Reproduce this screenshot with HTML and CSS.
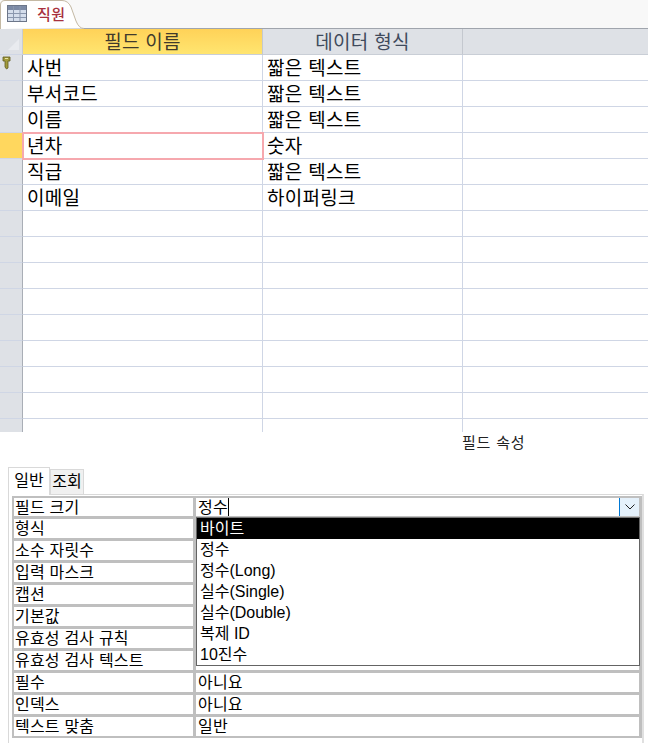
FILE: index.html
```html
<!DOCTYPE html>
<html lang="ko">
<head>
<meta charset="utf-8">
<title>직원</title>
<link rel="stylesheet" href="styles.css">
</head>
<body>
<div class="tabbar">
  <div class="doc-tab">
    <svg class="tab-shape" width="84" height="29" viewBox="0 0 84 29"><path d="M0.5 29V5Q0.5 0.5 5 0.5H62Q68 0.5 71 7L76 21Q79 28.5 84 28.5" fill="#fff" stroke="#c4b9a4"/></svg>
    <svg class="tab-icon" width="20" height="17" viewBox="0 0 20 17">
      <rect x="0.5" y="0.5" width="19" height="16" fill="#d5deec" stroke="#6c7689"/>
      <rect x="1" y="1" width="18" height="4" fill="#7d8ba6"/>
      <path d="M1 8.500H19M1 12.500H19M6.500 1V16M13 1V16" stroke="#8a97ae"/>
    </svg>
    <span class="tab-label">직원</span>
  </div>
</div>
<div class="grid">
  <div class="corner"><svg width="23" height="25" viewBox="0 0 23 25"><path d="M8 21L19 10V21Z" fill="#e9ebef"/></svg></div>
  <div class="head active">필드 이름</div>
  <div class="head">데이터 형식</div>
  <div class="head blank"></div>

  <div class="sel"><svg class="key" width="10" height="14" viewBox="0 0 10 14"><path d="M1 1H8V5H6V12L4.500 13L3 11V5H1Z" fill="#a19a3c" stroke="#5f5a20" stroke-width="0.8"/><path d="M3 2.500H6" stroke="#e8e3a0"/></svg></div><div class="cell">사번</div><div class="cell">짧은 텍스트</div><div class="cell"></div>
  <div class="sel"></div><div class="cell">부서코드</div><div class="cell">짧은 텍스트</div><div class="cell"></div>
  <div class="sel"></div><div class="cell">이름</div><div class="cell">짧은 텍스트</div><div class="cell"></div>
  <div class="sel current"></div><div class="cell focus">년차</div><div class="cell">숫자</div><div class="cell"></div>
  <div class="sel"></div><div class="cell">직급</div><div class="cell">짧은 텍스트</div><div class="cell"></div>
  <div class="sel"></div><div class="cell">이메일</div><div class="cell">하이퍼링크</div><div class="cell"></div>
  <div class="sel"></div><div class="cell"></div><div class="cell"></div><div class="cell"></div>
  <div class="sel"></div><div class="cell"></div><div class="cell"></div><div class="cell"></div>
  <div class="sel"></div><div class="cell"></div><div class="cell"></div><div class="cell"></div>
  <div class="sel"></div><div class="cell"></div><div class="cell"></div><div class="cell"></div>
  <div class="sel"></div><div class="cell"></div><div class="cell"></div><div class="cell"></div>
  <div class="sel"></div><div class="cell"></div><div class="cell"></div><div class="cell"></div>
  <div class="sel"></div><div class="cell"></div><div class="cell"></div><div class="cell"></div>
  <div class="sel"></div><div class="cell"></div><div class="cell"></div><div class="cell"></div>
  <div class="sel"></div><div class="cell"></div><div class="cell"></div><div class="cell"></div>
</div>
<div class="section-title">필드 속성</div>
<div class="prop-tabs">
  <div class="prop-tab on">일반</div>
  <div class="prop-tab">조회</div>
</div>
<div class="prop-panel">
  <div class="props">
    <div class="name">필드 크기</div><div class="value combo"><span class="caret">정수</span><span class="drop-btn"><svg width="10" height="6" viewBox="0 0 10 6"><path d="M0.500 0.500L5 5L9.500 0.500" fill="none" stroke="#222"/></svg></span></div>
    <div class="name">형식</div><div class="value"></div>
    <div class="name">소수 자릿수</div><div class="value"></div>
    <div class="name">입력 마스크</div><div class="value"></div>
    <div class="name">캡션</div><div class="value"></div>
    <div class="name">기본값</div><div class="value"></div>
    <div class="name">유효성 검사 규칙</div><div class="value"></div>
    <div class="name">유효성 검사 텍스트</div><div class="value"></div>
    <div class="name">필수</div><div class="value">아니요</div>
    <div class="name">인덱스</div><div class="value">아니요</div>
    <div class="name">텍스트 맞춤</div><div class="value">일반</div>
  </div>
  <ul class="dropdown">
    <li class="picked">바이트</li>
    <li>정수</li>
    <li>정수(Long)</li>
    <li>실수(Single)</li>
    <li>실수(Double)</li>
    <li>복제 ID</li>
    <li>10진수</li>
  </ul>
</div>
</body>
</html>
```
FILE: styles.css
```css
* { box-sizing: border-box; }
html, body { margin: 0; padding: 0; }
body {
  width: 648px;
  height: 743px;
  overflow: hidden;
  background: #fff;
  color: #000;
  font-family: "Liberation Sans", "Noto Sans CJK KR", sans-serif;
}
.tabbar {
  height: 29px;
  background: #f8f8f8;
  border-bottom: 1px solid #a0a5ad;
}
.doc-tab {
  position: relative;
  width: 84px;
  height: 29px;
  display: flex;
  align-items: center;
  gap: 10px;
  padding: 0 0 2px 7px;
}
.tab-shape { position: absolute; left: 0; top: 0; }
.tab-icon { position: relative; }
.tab-label { position: relative; top: 1px; color: #a8323e; font-size: 15px; font-weight: 500; letter-spacing: 0.5px; line-height: 20px; }
.grid {
  display: grid;
  grid-template-columns: 23px 240px 200px 1fr;
  grid-template-rows: 26px;
  grid-auto-rows: 26px;
  height: 403px;
  overflow: hidden;
}
.corner { background: #dee1e6; border-right: 1px solid #c8ccd2; border-bottom: 1px solid #cfd6e5; }
.corner svg { display: block; }
.head {
  background: #dee1e6;
  border-right: 1px solid #c4c8cf;
  border-bottom: 1px solid #c9ced6;
  color: #3f4a5c;
  font-size: 19px;
  line-height: 23px;
  padding-top: 2px;
  text-align: center;
  letter-spacing: 0.3px;
  white-space: nowrap;
}
.head.active {
  background: linear-gradient(#ffd258, #ffe570);
  color: #403a2c;
}
.head.blank { border-right: 0; }
.sel {
  position: relative;
  background: #dee1e6;
  border-right: 1px solid #a9aeb6;
  border-bottom: 1px solid #cfd6e5;
}
.sel.current { background: #ffd75e; }
.key { position: absolute; left: 2px; top: 1px; }
.cell {
  position: relative;
  border-right: 1px solid #cfd6e5;
  border-bottom: 1px solid #cfd6e5;
  font-size: 19px;
  line-height: 23px;
  padding: 2px 0 0 4px;
  letter-spacing: 0.3px;
  white-space: nowrap;
}
.cell:nth-child(4n) { border-right: 0; }
.focus {
  outline: 2px solid #f6a8ae;
  outline-offset: -1px;
  z-index: 1;
}
.section-title {
  height: 35px;
  padding: 1px 0 0 462px;
  font-size: 15px;
  line-height: 20px;
  color: #222;
  letter-spacing: 0.8px;
}
.prop-tabs {
  display: flex;
  align-items: flex-end;
  height: 27px;
  margin-left: 8px;
}
.prop-tab {
  width: 34px;
  height: 25px;
  background: #f0f0f0;
  border: 1px solid #d9d9d9;
  border-bottom: 0;
  font-size: 16px;
  line-height: 24px;
  text-align: center;
  white-space: nowrap;
}
.prop-tab.on {
  width: 42px;
  height: 28px;
  background: #fff;
  line-height: 25px;
  margin-bottom: -1px;
  position: relative;
  z-index: 1;
}
.prop-panel {
  position: relative;
  margin-left: 8px;
  width: 636px;
  height: 249px;
  border-top: 1px solid #d9d9d9;
  border-left: 1px solid #d9d9d9;
  border-right: 2px solid #e0e0e0;
  padding: 1px 0 0 3px;
}
.props {
  display: grid;
  grid-template-columns: 184px 446px;
  grid-template-rows: 20px;
  grid-auto-rows: 22px;
  width: 630px;
  background: #bfbfbf;
  padding-bottom: 2px;
}
.name, .value {
  font-size: 16px;
  line-height: 20px;
  letter-spacing: 0.2px;
  background: #fff;
  border-top: 3px solid #bfbfbf;
  white-space: nowrap;
}
.name:nth-child(1), .value:nth-child(2) { border-top-width: 2px; }
.name { padding-left: 1px; border-left: 2px solid #bfbfbf; border-right: 3px solid #bfbfbf; }
.value { padding-left: 2px; border-right: 3px solid #bfbfbf; }
.combo { display: flex; justify-content: space-between; padding-right: 0; }
.caret { display: block; width: 31px; border-right: 1px solid #000; height: 18px; }
.drop-btn {
  display: flex;
  align-items: center;
  justify-content: center;
  width: 20px;
  height: 18px;
  background: #e5f1fb;
  border-left: 1px solid #0078d4;
}
.dropdown {
  position: absolute;
  left: 187px;
  top: 22px;
  width: 444px;
  height: 149px;
  margin: 0;
  padding: 0;
  list-style: none;
  background: #fff;
  border: 1px solid #646464;
  border-top-color: #777;
  font-size: 16px;
  line-height: 21px;
}
.dropdown li { height: 21px; padding-left: 3px; white-space: nowrap; }
.dropdown li.picked { background: #000; color: #fff; }
```
